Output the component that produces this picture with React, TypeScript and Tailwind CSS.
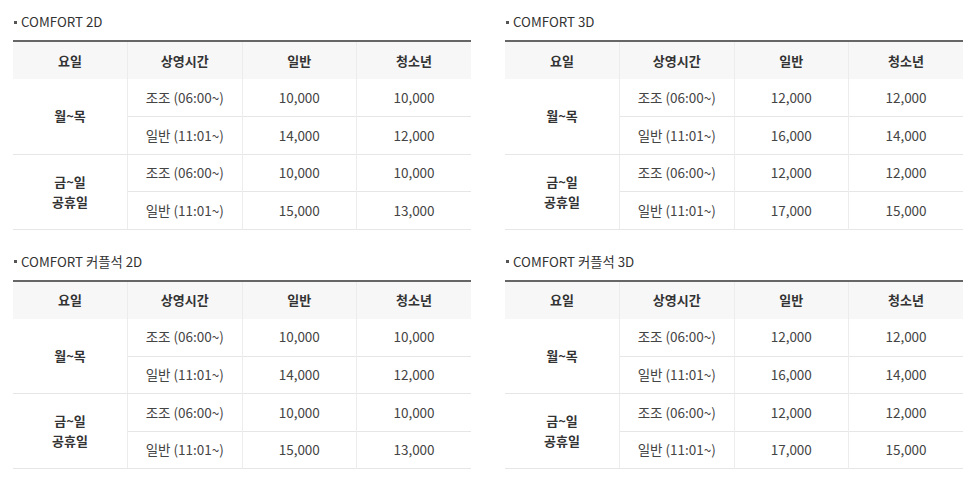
const font = { fontFamily: '"Noto Sans CJK KR", "Noto Sans", sans-serif' };

type Price = { label: string; adult: string; teen: string };
type Group = { days: string[]; rows: Price[] };
type Section = { title: string; groups: Group[] };

const mk = (a: [string, string][]): Group[] => [
  {
    days: ["월~목"],
    rows: [
      { label: "조조 (06:00~)", adult: a[0][0], teen: a[0][1] },
      { label: "일반 (11:01~)", adult: a[1][0], teen: a[1][1] },
    ],
  },
  {
    days: ["금~일", "공휴일"],
    rows: [
      { label: "조조 (06:00~)", adult: a[2][0], teen: a[2][1] },
      { label: "일반 (11:01~)", adult: a[3][0], teen: a[3][1] },
    ],
  },
];

const p2d: [string, string][] = [
  ["10,000", "10,000"],
  ["14,000", "12,000"],
  ["10,000", "10,000"],
  ["15,000", "13,000"],
];
const p3d: [string, string][] = [
  ["12,000", "12,000"],
  ["16,000", "14,000"],
  ["12,000", "12,000"],
  ["17,000", "15,000"],
];

const sections: Section[][] = [
  [
    { title: "COMFORT 2D", groups: mk(p2d) },
    { title: "COMFORT 3D", groups: mk(p3d) },
  ],
  [
    { title: "COMFORT 커플석 2D", groups: mk(p2d) },
    { title: "COMFORT 커플석 3D", groups: mk(p3d) },
  ],
];

function PriceTable({ section }: { section: Section }) {
  return (
    <div className="w-[458px]">
      <div className="h-[40px] flex items-end pb-[10px]">
        <span className="flex items-center text-[13.3px] leading-[16px] text-[#333]">
          <span className="w-[3px] h-[3px] bg-[#555] ml-[1px] mr-[4px]" />
          {section.title}
        </span>
      </div>
      <table className="w-full table-fixed border-collapse text-[13.5px] text-[#444]">
        <thead>
          <tr className="h-[38px] bg-[#f7f7f7] border-t-[2px] border-t-[#666]">
            {["요일", "상영시간", "일반", "청소년"].map((h, i) => (
              <th
                key={h}
                className={`font-semibold text-[13px] text-[#333] ${i < 3 ? "border-r border-r-[#ececec]" : ""}`}
              >
                {h}
              </th>
            ))}
          </tr>
        </thead>
        <tbody>
          {section.groups.map((g, gi) =>
            g.rows.map((r, ri) => (
              <tr key={`${gi}-${ri}`} className="h-[37.5px] border-b border-b-[#e6e6e6]">
                {ri === 0 && (
                  <td
                    rowSpan={2}
                    className="text-center font-semibold text-[13px] text-[#333] leading-[20px] border-r border-r-[#ececec] border-b border-b-[#e6e6e6]"
                  >
                    {g.days.map((d) => (
                      <div key={d}>{d}</div>
                    ))}
                  </td>
                )}
                <td className="text-center pb-[1px] border-r border-r-[#ececec]">{r.label}</td>
                <td className="text-center pb-[1px] border-r border-r-[#ececec]">{r.adult}</td>
                <td className="text-center pb-[1px]">{r.teen}</td>
              </tr>
            ))
          )}
        </tbody>
      </table>
    </div>
  );
}

export default function App() {
  return (
    <div className="w-[979px] h-[484px] bg-white pl-[13px]" style={font}>
      {sections.map((row, i) => (
        <div key={i} className={`flex gap-[34px] ${i > 0 ? "mt-[10px]" : ""}`}>
          {row.map((s) => (
            <PriceTable key={s.title} section={s} />
          ))}
        </div>
      ))}
    </div>
  );
}
